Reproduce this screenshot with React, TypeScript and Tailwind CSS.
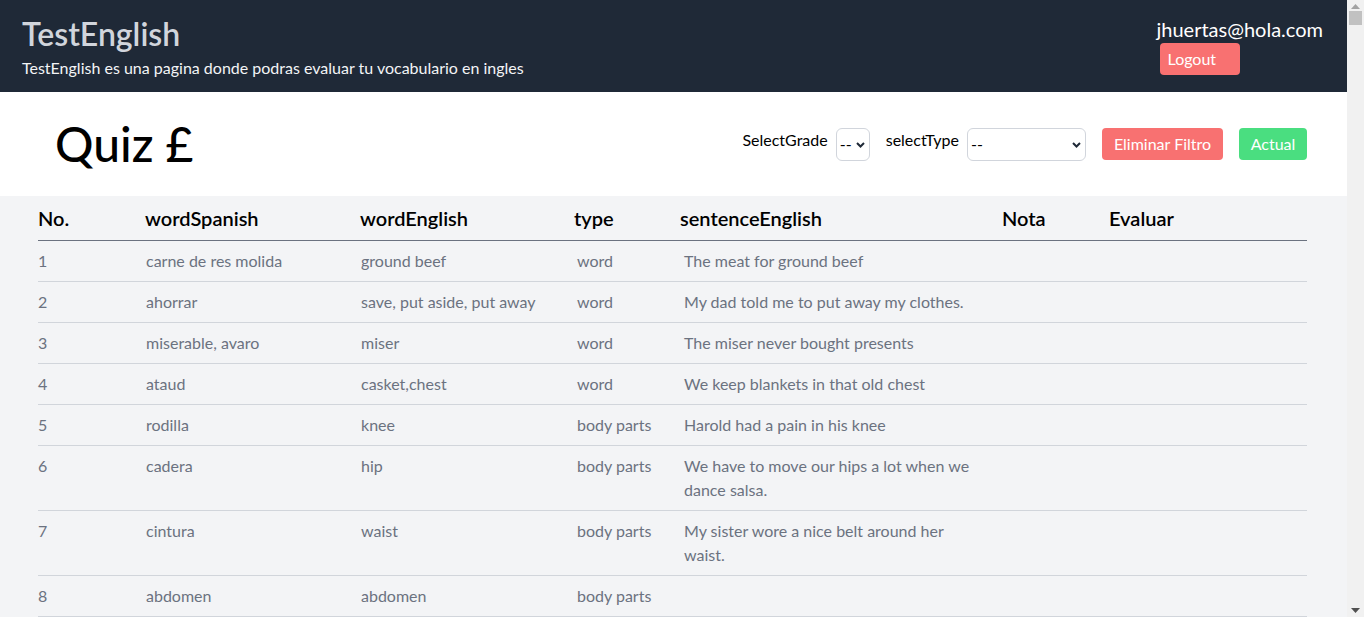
import { useState } from "react";

interface Word {
  id: number;
  spanish: string;
  english: string;
  type: string;
  sentence: string;
}

const words: Word[] = [
  { id: 1, spanish: "carne de res molida", english: "ground beef", type: "word", sentence: "The meat for ground beef" },
  { id: 2, spanish: "ahorrar", english: "save, put aside, put away", type: "word", sentence: "My dad told me to put away my clothes." },
  { id: 3, spanish: "miserable, avaro", english: "miser", type: "word", sentence: "The miser never bought presents" },
  { id: 4, spanish: "ataud", english: "casket,chest", type: "word", sentence: "We keep blankets in that old chest" },
  { id: 5, spanish: "rodilla", english: "knee", type: "body parts", sentence: "Harold had a pain in his knee" },
  { id: 6, spanish: "cadera", english: "hip", type: "body parts", sentence: "We have to move our hips a lot when we dance salsa." },
  { id: 7, spanish: "cintura", english: "waist", type: "body parts", sentence: "My sister wore a nice belt around her waist." },
  { id: 8, spanish: "abdomen", english: "abdomen", type: "body parts", sentence: "" },
];

const cols = "grid grid-cols-[107px_215px_214px_106px_322px_107px_198px]";

function Chevron() {
  return (
    <svg width="9" height="6" viewBox="0 0 9 6" className="pointer-events-none absolute right-[5px] top-[14px]">
      <path d="M1 1 L4.5 4.5 L8 1" fill="none" stroke="#1f2937" strokeWidth="2" />
    </svg>
  );
}

function Select({ width }: { width: string }) {
  return (
    <div className={`relative ${width}`}>
      <select className="h-[33px] w-full appearance-none rounded-md border border-gray-300 bg-white pl-[3px] text-base text-black outline-none">
        <option>--</option>
      </select>
      <Chevron />
    </div>
  );
}

function Scrollbar() {
  return (
    <aside className="flex w-[17px] flex-col items-center bg-[#f1f1f1]">
      <svg width="9" height="5" viewBox="0 0 9 5" className="mt-[4px]">
        <path d="M0 5 L4.5 0 L9 5 Z" fill="#a3a3a3" />
      </svg>
      <div className="mt-[2px] h-[14px] w-[13px] bg-[#c1c1c1]" />
      <div className="flex-1" />
      <svg width="9" height="5" viewBox="0 0 9 5" className="mb-[4px]">
        <path d="M0 0 L9 0 L4.5 5 Z" fill="#505050" />
      </svg>
    </aside>
  );
}

export default function App() {
  const [grade] = useState("--");

  return (
    <div className="flex h-[617px] overflow-hidden font-['Lato',sans-serif]" data-grade={grade}>
      <div className="flex-1 overflow-hidden">
        <header className="flex h-[92px] justify-between bg-[#1f2937] pl-[22px] pr-6">
          <div className="pt-[15px]">
            <h1 className="text-[32px] font-semibold leading-[38px] text-gray-300">TestEnglish</h1>
            <p className="mt-[3px] text-base text-gray-100">
              TestEnglish es una pagina donde podras evaluar tu vocabulario en ingles
            </p>
          </div>
          <div className="pt-[15px]">
            <p className="text-xl text-white">jhuertas@hola.com</p>
            <button className="ml-[3px] h-8 w-20 rounded bg-[#f87171] px-2 text-left text-base text-white">
              Logout
            </button>
          </div>
        </header>

        <section className="flex h-[104px] items-center justify-between bg-white pl-[55px] pr-10">
          <h2 className="text-5xl font-medium text-black">Quiz £</h2>
          <div className="flex items-center gap-4">
            <div className="flex items-start gap-2">
              <span className="text-base text-black">SelectGrade</span>
              <Select width="w-[34px]" />
            </div>
            <div className="flex items-start gap-2">
              <span className="text-base text-black">selectType</span>
              <Select width="w-[119px]" />
            </div>
            <button className="h-8 w-[121px] rounded bg-[#f87171] text-base text-white">Eliminar Filtro</button>
            <button className="h-8 w-[68px] rounded bg-[#4ade80] text-base text-white">Actual</button>
          </div>
        </section>

        <main className="h-full bg-[#f3f4f6] pl-[38px] pr-10 pt-[8px]">
          <div className={`${cols} border-b border-[#6b7280] pb-[8px] text-xl font-semibold text-black`}>
            <div>No.</div>
            <div>wordSpanish</div>
            <div>wordEnglish</div>
            <div>type</div>
            <div>sentenceEnglish</div>
            <div>Nota</div>
            <div>Evaluar</div>
          </div>
          {words.map((w) => (
            <div key={w.id} className={`${cols} border-b border-[#d1d5db] py-2 text-base leading-6 text-[#6b7280]`}>
              <div>{w.id}</div>
              <div className="pl-px">{w.spanish}</div>
              <div className="pl-px">{w.english}</div>
              <div className="pl-[3px]">{w.type}</div>
              <div className="pl-1 pr-4">{w.sentence}</div>
              <div />
              <div />
            </div>
          ))}
        </main>
      </div>
      <Scrollbar />
    </div>
  );
}
